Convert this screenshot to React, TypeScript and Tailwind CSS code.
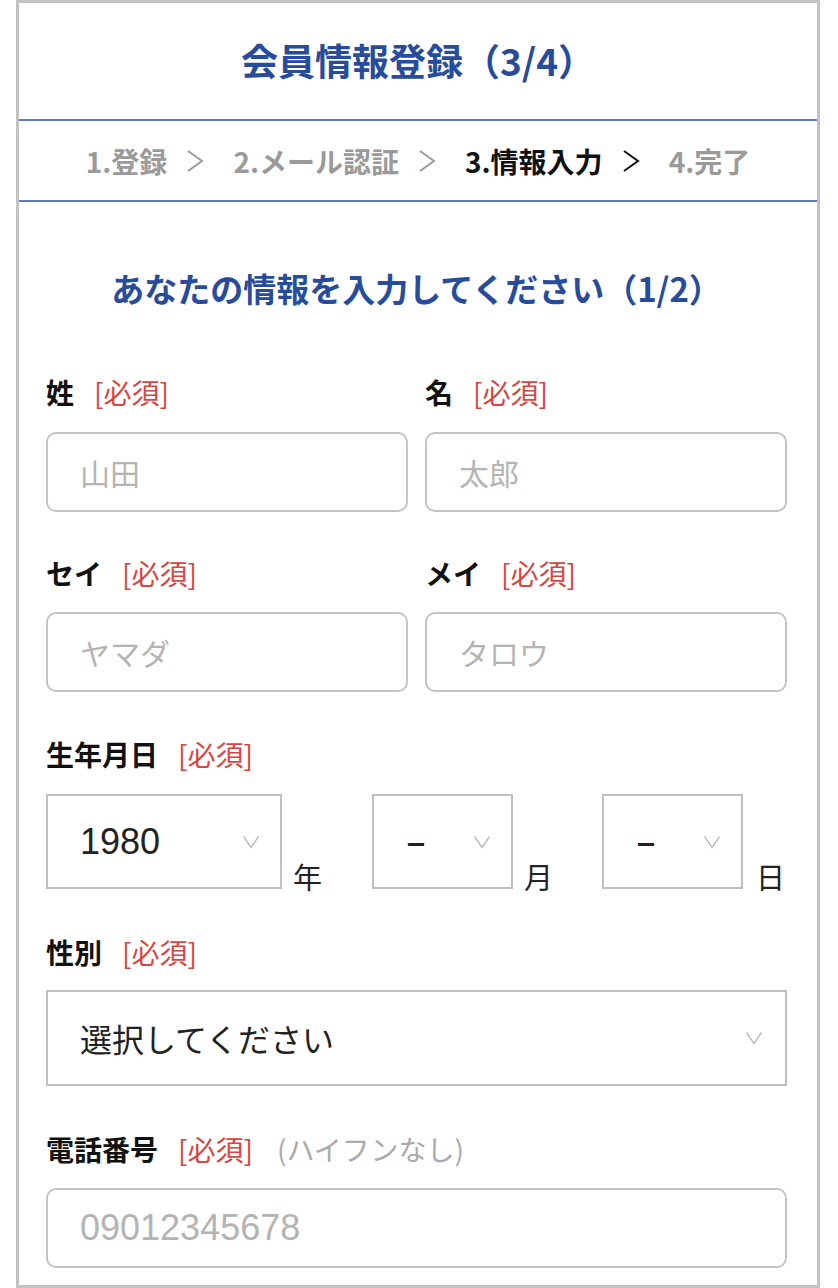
import React from "react";

const Req = () => (
  <span className="ml-[20px] font-normal text-[#d8443f]">[必須]</span>
);

const Label = ({ text, extra }: { text: string; extra?: string }) => (
  <div className="flex h-[40px] items-center text-[28px] leading-[40px]">
    <span className="font-bold text-[#111]">{text}</span>
    <Req />
    {extra && <span className="ml-[24px] text-[#aaaaaa]">{extra}</span>}
  </div>
);

const TextBox = ({ ph, className = "", digits = false }: { ph: string; className?: string; digits?: boolean }) => (
  <div
    className={`flex h-[80px] items-center rounded-[10px] border-2 border-[#c4c4c4] pl-[32px] text-[#b4b4b4] ${
      digits ? "font-['Liberation_Sans','Noto_Sans_CJK_JP',sans-serif] text-[36px]" : "text-[30px]"
    } ${className}`}
  >
    {ph}
  </div>
);

const Chevron = () => (
  <svg width="18" height="14" viewBox="0 0 18 14" className="shrink-0">
    <polyline points="1.5,1.5 9,12.5 16.5,1.5" fill="none" stroke="#bdbdbd" strokeWidth="1.4" />
  </svg>
);

const SelectBox = ({
  children,
  className = "",
  pr = "pr-[20px]",
}: {
  children: React.ReactNode;
  className?: string;
  pr?: string;
}) => (
  <div
    className={`flex h-[95px] items-center justify-between border-2 border-[#bfbfbf] pl-[32px] ${pr} text-[32px] text-[#222] ${className}`}
  >
    {children}
    <Chevron />
  </div>
);

const Dash = () => (
  <span className="font-['DejaVu_Sans',sans-serif] text-[40px] leading-none text-[#222]">–</span>
);

const StepChevron = ({ color }: { color: string }) => (
  <svg width="20" height="24" viewBox="0 0 20 24" className="ml-[18px] mr-[28px] shrink-0">
    <polyline points="3,2 17,12 3,22" fill="none" stroke={color} strokeWidth="2" />
  </svg>
);

export default function App() {
  return (
    <div className="h-[1288px] w-[838px] overflow-hidden bg-white font-['Noto_Sans_CJK_JP',sans-serif]">
      <div className="ml-[16px] h-[1288px] w-[804px] border-[3px] border-[#c2c2c2]">
        <div className="flex h-[116px] items-center justify-center text-[37px] font-bold text-[#264c9b]">
          会員情報登録（3/4）
        </div>
        <div className="flex h-[83px] items-center justify-center border-y-2 border-[#5d7bba] text-[28px] font-bold text-[#9a9a9a]">
          <span>1.登録</span>
          <StepChevron color="#9a9a9a" />
          <span>2.メール認証</span>
          <StepChevron color="#9a9a9a" />
          <span className="text-[#111]">3.情報入力</span>
          <StepChevron color="#111" />
          <span>4.完了</span>
        </div>
        <div className="pl-[27px] pr-[30px]">
          <div className="mt-[67px] flex h-[40px] items-center justify-center text-[33px] font-bold text-[#264c9b]">
            あなたの情報を入力してください（1/2）
          </div>

          <div className="mt-[63px] grid grid-cols-2 gap-x-[17px]">
            <Label text="姓" />
            <Label text="名" />
            <TextBox ph="山田" className="mt-[20px]" />
            <TextBox ph="太郎" className="mt-[20px]" />
          </div>

          <div className="mt-[41px] grid grid-cols-2 gap-x-[17px]">
            <Label text="セイ" />
            <Label text="メイ" />
            <TextBox ph="ヤマダ" className="mt-[19px]" />
            <TextBox ph="タロウ" className="mt-[19px]" />
          </div>

          <div className="mt-[42px]">
            <Label text="生年月日" />
          </div>
          <div className="mt-[20px] flex items-end text-[29px] text-[#222]">
            <SelectBox className="w-[236px]">
              <span className="font-['Liberation_Sans',sans-serif] text-[36px]">1980</span>
            </SelectBox>
            <span className="ml-[11px] mb-[-2px] w-[30px] leading-[1]">年</span>
            <SelectBox className="ml-[49px] w-[141px]">
              <Dash />
            </SelectBox>
            <span className="ml-[11px] mb-[-2px] w-[30px] leading-[1]">月</span>
            <SelectBox className="ml-[48px] w-[141px]">
              <Dash />
            </SelectBox>
            <span className="ml-[13px] mb-[-2px] w-[30px] leading-[1]">日</span>
          </div>

          <div className="mt-[43px]">
            <Label text="性別" />
          </div>
          <SelectBox className="mt-[18px] h-[96px]" pr="pr-[22px]">
            <span>選択してください</span>
          </SelectBox>

          <div className="mt-[43px]">
            <Label text="電話番号" extra="(ハイフンなし)" />
          </div>
          <TextBox ph="09012345678" className="mt-[19px]" digits />
        </div>
      </div>
    </div>
  );
}
